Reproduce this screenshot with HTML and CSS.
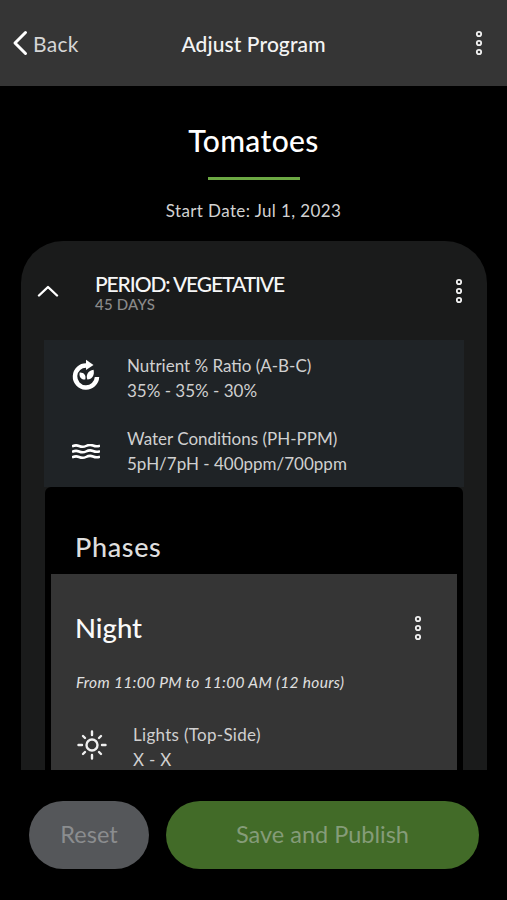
FILE: index.html
```html
<!DOCTYPE html>
<html lang="en">
<head>
<meta charset="utf-8">
<title>Adjust Program</title>
<link rel="stylesheet" href="styles.css">
</head>
<body>
<div class="app">
  <header class="topbar">
    <div class="back">
      <svg class="back-icon" viewBox="0 0 16 26"><path d="M13.500 2.500 3 13l10.500 10.500"/></svg>
      <span>Back</span>
    </div>
    <h1 class="topbar-title">Adjust Program</h1>
    <div class="topbar-end">
      <svg class="dots" viewBox="0 0 8 26"><circle cx="4" cy="4" r="2.200"/><circle cx="4" cy="13" r="2.200"/><circle cx="4" cy="22" r="2.200"/></svg>
    </div>
  </header>

  <section class="intro">
    <h2 class="crop">Tomatoes</h2>
    <div class="rule"></div>
    <p class="start">Start Date: Jul 1, 2023</p>
  </section>

  <main class="period">
    <div class="period-head">
      <svg class="chevron" viewBox="0 0 22 12"><path d="M2 10.500 11 2l9 8.500"/></svg>
      <div class="period-text">
        <div class="period-name">PERIOD: VEGETATIVE</div>
        <div class="period-days">45 DAYS</div>
      </div>
      <svg class="dots" viewBox="0 0 8 26"><circle cx="4" cy="4" r="2.200"/><circle cx="4" cy="13" r="2.200"/><circle cx="4" cy="22" r="2.200"/></svg>
    </div>

    <div class="info">
      <div class="info-row">
        <svg class="info-icon" viewBox="0 0 28 32">
          <path class="ring" d="M14.500 6.500A11 11 0 1 0 25 18"/>
          <path class="fill" d="M14 .8 21.500 6 14 11z"/>
          <path class="fill" d="M13.200 20.500c-4.200.5-6.400-2.800-5.500-7 3.800-.3 6.800 2.500 5.500 7z"/>
          <path class="fill" d="M15.300 20.500c-1.700-4.700.8-8.800 6.200-9.800 1.400 5-1.200 9.800-6.200 9.800z"/>
        </svg>
        <div class="info-text">
          <div>Nutrient % Ratio (A-B-C)</div>
          <div>35% - 35% - 30%</div>
        </div>
      </div>
      <div class="info-row">
        <svg class="info-icon" viewBox="0 0 28 16">
          <path class="wave" d="M0 2.500c3-1.600 4.500-1.600 7-.5s4 1.600 7 0 4.500-1.600 7-.5 4 1.600 7 0"/>
          <path class="wave" d="M0 8c3-1.600 4.500-1.600 7-.5s4 1.600 7 0 4.500-1.600 7-.5 4 1.600 7 0"/>
          <path class="wave" d="M0 13.500c3-1.600 4.500-1.600 7-.5s4 1.600 7 0 4.500-1.600 7-.5 4 1.600 7 0"/>
        </svg>
        <div class="info-text">
          <div>Water Conditions (PH-PPM)</div>
          <div>5pH/7pH - 400ppm/700ppm</div>
        </div>
      </div>
    </div>

    <div class="phases">
      <h3 class="phases-title">Phases</h3>
      <article class="phase">
        <div class="phase-head">
          <div class="phase-name">Night</div>
          <svg class="dots" viewBox="0 0 8 26"><circle cx="4" cy="4" r="2.200"/><circle cx="4" cy="13" r="2.200"/><circle cx="4" cy="22" r="2.200"/></svg>
        </div>
        <p class="phase-time">From 11:00 PM to 11:00 AM (12 hours)</p>
        <div class="setting">
          <svg class="sun" viewBox="0 0 30 30">
            <circle cx="15" cy="15" r="5.500"/>
            <path d="M15 1.500v3.500M15 25v3.500M1.500 15H5M25 15h3.500M6 6l2 2M22 22l2 2M24 6l-2 2M8 22l-2 2"/>
          </svg>
          <div class="setting-text">
            <div>Lights (Top-Side)</div>
            <div>X - X</div>
          </div>
        </div>
      </article>
    </div>
  </main>

  <footer class="actions">
    <button class="btn btn-reset">Reset</button>
    <button class="btn btn-save">Save and Publish</button>
  </footer>
</div>
</body>
</html>
```

FILE: styles.css
```css
* { box-sizing: border-box; }
html, body { margin: 0; padding: 0; background: #000; }
body { font-family: "Lato", "Liberation Sans", sans-serif; color: #fff; }
.app { width: 507px; height: 900px; display: flex; flex-direction: column; overflow: hidden; background: #000; }

.topbar { height: 86px; flex: none; background: #353535; display: flex; align-items: center; padding: 0 24px 0 12px; }
.back { flex: 1; display: flex; align-items: center; gap: 5px; font-size: 21px; color: #d6d6d6; letter-spacing: .3px; }
.back-icon { width: 16px; height: 26px; fill: none; stroke: #fff; stroke-width: 3; stroke-linecap: round; stroke-linejoin: round; }
.topbar-title { margin: 0 0 0 12px; font-size: 21px; font-weight: 500; color: #f4f4f4; letter-spacing: .1px; }
.topbar-end { flex: 1; display: flex; justify-content: flex-end; }
.dots { width: 8px; height: 26px; fill: none; stroke: #f0f0f0; stroke-width: 1.800; flex: none; }

.intro { height: 155px; flex: none; display: flex; flex-direction: column; align-items: center; padding-top: 36px; }
.crop { margin: 0; font-size: 30px; line-height: 36px; font-weight: 500; color: #fff; letter-spacing: .35px; }
.rule { width: 92px; height: 3px; margin-top: 19px; background: #6ca843; }
.start { margin: 19px 0 0; font-size: 17px; line-height: 24px; color: #d2d2d2; letter-spacing: .4px; }

.period { height: 529px; flex: none; margin: 0 20px 0 21px; padding: 0 23px; background: #1a1b1b; border-radius: 42px 42px 0 0; overflow: hidden; display: flex; flex-direction: column; }
.period-head { height: 99px; flex: none; display: flex; align-items: center; padding: 0 1px 0 0; }
.chevron { width: 22px; height: 12px; margin-left: -7px; fill: none; stroke: #fff; stroke-width: 2.400; stroke-linecap: round; stroke-linejoin: round; }
.period-text { flex: 1; margin-left: 36px; margin-top: 3px; }
.period-name { font-size: 21px; line-height: 24px; font-weight: 500; color: #f6f6f6; letter-spacing: -1.100px; }
.period-days { font-size: 15px; line-height: 17px; color: #8a8a8a; letter-spacing: .2px; font-weight: 500; }

.info { height: 147px; flex: none; background: #1f2326; padding-top: 14px; }
.info-row { display: flex; height: 73px; padding-left: 28px; align-items: flex-start; }
.info-icon { width: 28px; height: 32px; flex: none; margin-top: 5px; }
.info-row + .info-row .info-icon { height: 16px; margin-top: 17px; }
.ring { fill: none; stroke: #fff; stroke-width: 4.500; }
.fill { fill: #fff; }
.wave { fill: none; stroke: #fff; stroke-width: 2.500; }
.info-text { margin-left: 27px; font-size: 17px; line-height: 24.500px; color: #d0d0d0; letter-spacing: 0; }

.phases { flex: 1; margin: 0 1px; background: #000; border-radius: 6px 6px 0 0; padding: 0 6px; display: flex; flex-direction: column; min-height: 0; }
.phases-title { margin: 0; padding: 42px 0 0 24px; height: 87px; flex: none; font-size: 27px; line-height: 36px; font-weight: 500; color: #dedede; letter-spacing: .65px; }
.phase { flex: 1; background: #353535; padding: 0 0 0 24px; min-height: 0; overflow: hidden; }
.phase-head { height: 72px; padding: 36px 35px 0 0; display: flex; justify-content: space-between; align-items: center; }
.phase-name { font-size: 27.500px; line-height: 36px; font-weight: 500; color: #fafafa; }
.phase-time { margin: 13px 0 0; padding: 11px 0 0 1px; font-size: 15.500px; line-height: 24px; font-style: italic; color: #e0e0e0; letter-spacing: .3px; }
.setting { display: flex; margin-top: 29px; }
.sun { width: 30px; height: 30px; margin: 7px 0 0 2px; flex: none; fill: none; stroke: #f0f0f0; stroke-width: 2.400; stroke-linecap: round; }
.setting-text { margin-left: 26px; font-size: 17px; line-height: 24.500px; color: #d0d0d0; letter-spacing: .3px; }

.actions { flex: 1; display: flex; gap: 17px; padding: 31px 28px 31px 29px; }
.btn { border: 0; height: 68px; border-radius: 34px; font-family: inherit; font-size: 23.500px; padding: 0 0 2px; }
.btn-reset { width: 120px; background: #55575a; color: #8b8d8f; }
.btn-save { width: 313px; background: #426b28; color: #859c79; }
```
